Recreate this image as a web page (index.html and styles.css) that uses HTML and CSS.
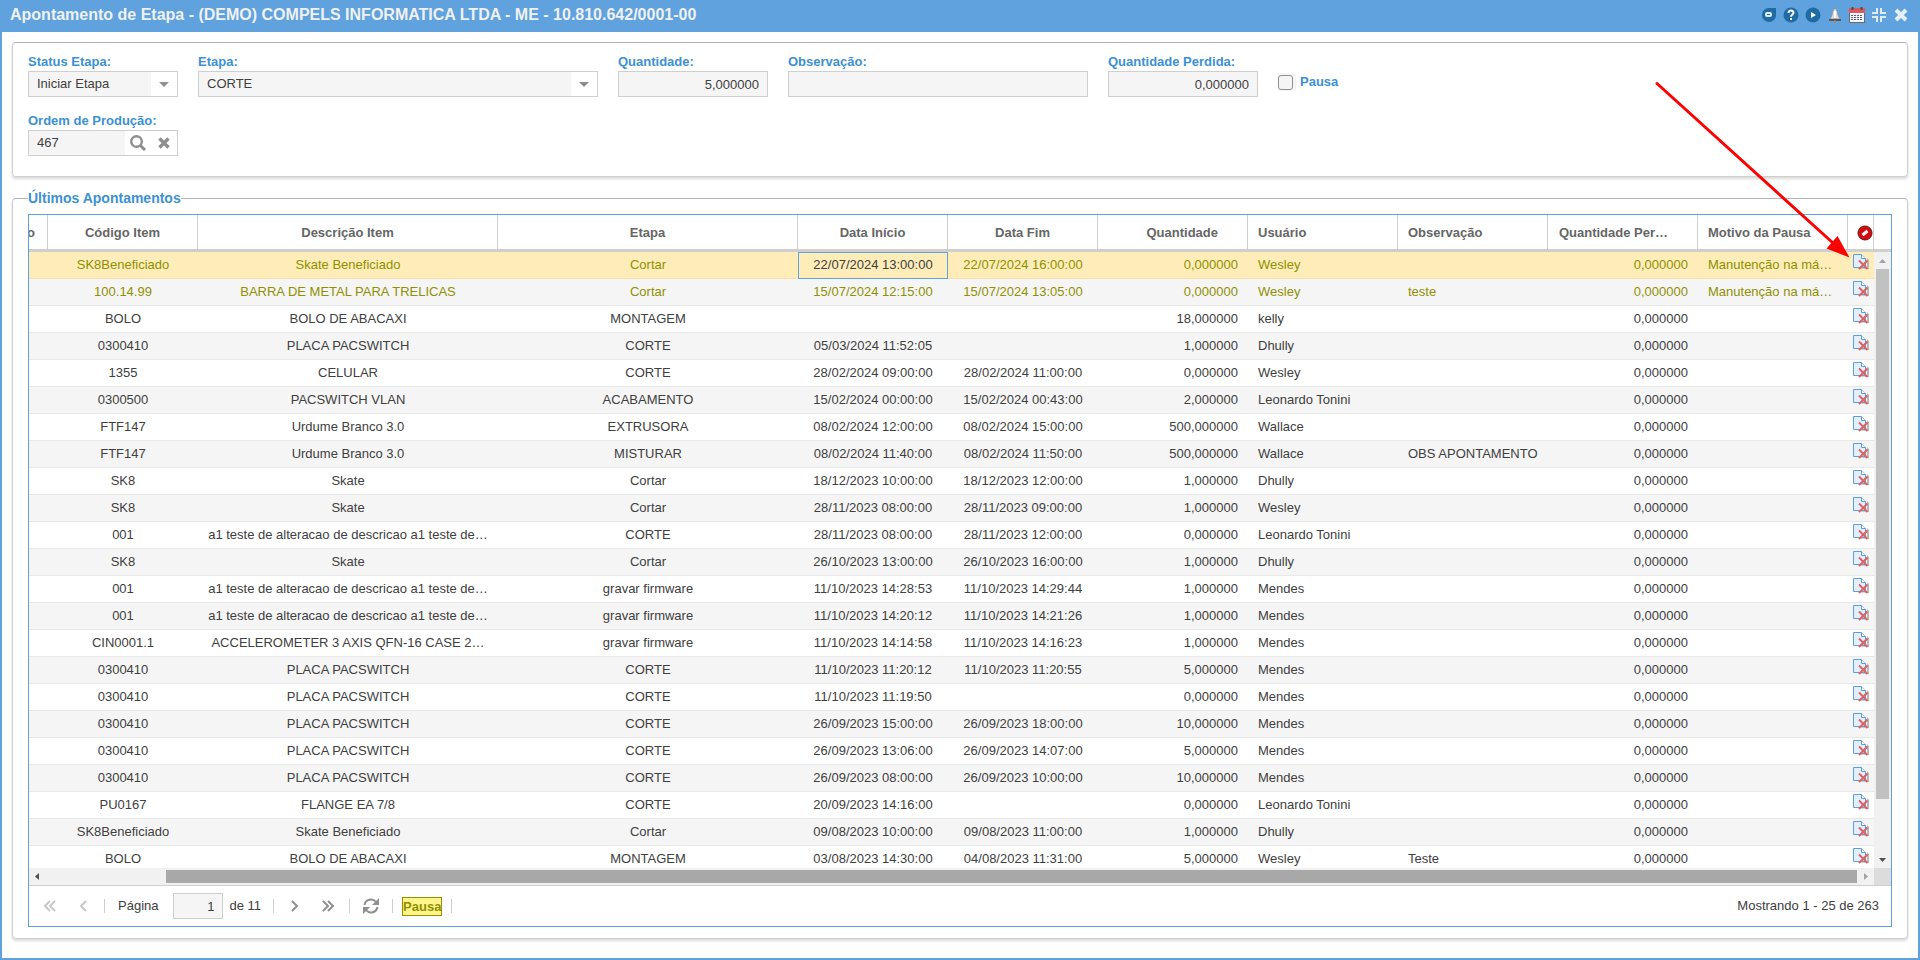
FILE: index.html
```html
<!DOCTYPE html>
<html lang="pt-BR">
<head>
  <meta charset="utf-8" />
  <meta name="viewport" content="width=device-width, initial-scale=1" />
  <title>Apontamento de Etapa</title>
  <link rel="stylesheet" href="styles.css">
</head>
<body>
<svg class="sprite" aria-hidden="true">
  <symbol id="i-delete" viewBox="0 0 16 16">
    <path d="M3 15H16V6L14 4V14Z" fill="#b9b9b9" />
    <path d="M.5 .5H8.500L12.500 4.500V13.500H.5Z" fill="#e3effc" stroke="#5c9fe4" />
    <path d="M8.500 .5V4.500H12.500" fill="#fff" stroke="#5c9fe4" />
    <path d="M6 6.500L14.500 15M14.500 6.500L6 15" fill="none" stroke="#de6262" stroke-width="2" />
  </symbol>
</svg>

<header class="title">
  <h1 class="title-text">Apontamento de Etapa - (DEMO) COMPELS INFORMATICA LTDA - ME - 10.810.642/0001-00</h1>
  <div class="title-tools">
    <button class="tool" type="button" aria-label="Chat"><svg viewBox="0 0 16 16"><path d="M7 1H15V8A7 7 0 0 1 8 15A7 7 0 0 1 1 8A7 7 0 0 1 7 1Z" fill="#1e6ba6" /><rect x="4" y="5" width="7" height="5" rx="2" fill="#e3eefa" /><path d="M6 7.500H9" stroke="#1e6ba6" /></svg></button>
    <button class="tool" type="button" aria-label="Ajuda"><svg viewBox="0 0 16 16"><circle cx="8" cy="8" r="7.500" fill="#1e6ba6" /><path d="M5.500 6C5.500 2.800 10.500 2.800 10.500 5.800C10.500 7.600 8 7.500 8 9.800" fill="none" stroke="#fff" stroke-width="2" /><rect x="7" y="11" width="2" height="2" fill="#fff" /></svg></button>
    <button class="tool" type="button" aria-label="Executar"><svg viewBox="0 0 16 16"><circle cx="8" cy="8" r="7.500" fill="#1e6ba6" /><path d="M6 5L11 8L6 11Z" fill="#fff" /></svg></button>
    <button class="tool" type="button" aria-label="Avisos"><svg viewBox="0 0 16 16"><path d="M8 1C10 3 11 5 11 8L13 12H3L5 8C5 5 6 3 8 1Z" fill="#d9dde0" stroke="#8c949b" /><path d="M8 4V11" stroke="#fff" stroke-width="2" /><path d="M2 13H14" stroke="#52585e" stroke-width="2" /><path d="M7 14.500H9" stroke="#d97b2b" stroke-width="2" /></svg></button>
    <button class="tool" type="button" aria-label="Agenda"><svg viewBox="0 0 16 16"><rect x=".5" y="1.500" width="15" height="14" fill="#f5f5fa" stroke="#6d6a75" /><rect x="0" y="1" width="16" height="5" fill="#d95b5b" /><path d="M3.500 0V3M12.500 0V3" stroke="#4a4a55" stroke-width="2" /><path d="M2 8.500H14M2 10.500H14M2 12.500H14" stroke="#5b5e92" stroke-dasharray="2 1" /></svg></button>
    <button class="tool" type="button" aria-label="Restaurar"><svg viewBox="0 0 16 16"><path d="M6 1V6H1M10 1V6H15M6 15V10H1M10 15V10H15" fill="none" stroke="#dfecf8" stroke-width="2" /></svg></button>
    <button class="tool" type="button" aria-label="Fechar"><svg viewBox="0 0 16 16"><path d="M3 3L13 13M13 3L3 13" stroke="#e4effa" stroke-width="4" /></svg></button>
  </div>
</header>

<main class="content">
  <form class="panel form">
    <div class="form-row">
      <div class="field">
        <label class="label" for="status">Status Etapa:</label>
        <div class="combo">
          <select class="input" id="status"><option>Iniciar Etapa</option></select>
        </div>
      </div>
      <div class="field field--wide">
        <label class="label" for="etapa">Etapa:</label>
        <div class="combo">
          <select class="input" id="etapa"><option>CORTE</option></select>
        </div>
      </div>
      <div class="field">
        <label class="label" for="quantidade">Quantidade:</label>
        <input class="input input--num" id="quantidade" type="text" value="5,000000" />
      </div>
      <div class="field field--obs">
        <label class="label" for="observacao">Observação:</label>
        <input class="input" id="observacao" type="text" value="" />
      </div>
      <div class="field">
        <label class="label" for="perdida">Quantidade Perdida:</label>
        <input class="input input--num" id="perdida" type="text" value="0,000000" />
      </div>
      <div class="check">
        <span class="check-box"><input class="check-input" id="pausa" type="checkbox" /></span>
        <label class="label" for="pausa">Pausa</label>
      </div>
    </div>
    <div class="form-row">
      <div class="field">
        <label class="label" for="ordem">Ordem de Produção:</label>
        <div class="search">
          <input class="search-input" id="ordem" type="text" value="467" />
          <button class="search-button" type="button" aria-label="Pesquisar"><svg viewBox="0 0 16 16"><circle cx="6.500" cy="6.500" r="5.300" fill="none" stroke="#8f8f8f" stroke-width="2.400" /><path d="M10 10L15 15" stroke="#8f8f8f" stroke-width="3" /></svg></button>
          <button class="search-button" type="button" aria-label="Limpar"><svg viewBox="0 0 16 16"><path d="M3.500 3.500L12.500 12.500M12.500 3.500L3.500 12.500" stroke="#8f8f8f" stroke-width="3.500" /></svg></button>
        </div>
      </div>
    </div>
  </form>

  <section class="panel list">
    <h2 class="legend">Últimos Apontamentos</h2>
    <div class="grid">
      <div class="grid-main">
        <div class="grid-view">
          <table class="table">
            <colgroup>
              <col class="col-cut" /><col class="col-std" /><col /><col />
              <col class="col-std" /><col class="col-std" /><col class="col-std" /><col class="col-std" />
              <col class="col-std" /><col class="col-std" /><col class="col-std" /><col class="col-icon" />
            </colgroup>
            <thead>
              <tr>
                <th class="cut">o</th>
                <th>Código Item</th>
                <th>Descrição Item</th>
                <th>Etapa</th>
                <th>Data Início</th>
                <th>Data Fim</th>
                <th class="num">Quantidade</th>
                <th class="txt">Usuário</th>
                <th class="txt">Observação</th>
                <th class="num">Quantidade Per…</th>
                <th class="txt">Motivo da Pausa</th>
                <th class="ico"><svg class="icon" viewBox="0 0 16 16"><circle cx="8" cy="8" r="7" fill="#d9090d" stroke="#5e1a1a" /><path d="M5.500 10L10.500 6" stroke="#fff" stroke-width="3" /></svg></th>
              </tr>
            </thead>
            <tbody id="rows"></tbody>
          </table>
        </div>
        <div class="vscroll">
          <div class="vscroll-head"></div>
          <div class="vscroll-track">
            <svg class="arrow" viewBox="0 0 17 17"><path d="M5 11L8.500 7L12 11Z" fill="#a3a3a3" /></svg>
            <div class="vscroll-range"><div class="vscroll-thumb"></div></div>
            <svg class="arrow" viewBox="0 0 17 17"><path d="M5 7L8.500 11L12 7Z" fill="#505050" /></svg>
          </div>
        </div>
      </div>
      <div class="hscroll">
        <svg class="arrow" viewBox="0 0 17 17"><path d="M10 5L6 8.500L10 12Z" fill="#505050" /></svg>
        <div class="hscroll-range"><div class="hscroll-thumb"></div></div>
        <svg class="arrow" viewBox="0 0 17 17"><path d="M7 5L11 8.500L7 12Z" fill="#a3a3a3" /></svg>
        <div class="corner"></div>
      </div>
      <div class="pager">
        <button class="page-button" type="button" aria-label="Primeira página" disabled><svg viewBox="0 0 16 16"><path d="M8 3L3 8L8 13M13 3L8 8L13 13" /></svg></button>
        <button class="page-button" type="button" aria-label="Página anterior" disabled><svg viewBox="0 0 16 16"><path d="M11 3L6 8L11 13" /></svg></button>
        <span class="sep"></span>
        <label class="page-label" for="pagina">Página</label>
        <input class="input input--num page-input" id="pagina" type="text" value="1" />
        <span class="page-total">de 11</span>
        <span class="sep"></span>
        <button class="page-button" type="button" aria-label="Próxima página"><svg viewBox="0 0 16 16"><path d="M5 3L10 8L5 13" /></svg></button>
        <button class="page-button" type="button" aria-label="Última página"><svg viewBox="0 0 16 16"><path d="M3 3L8 8L3 13M8 3L13 8L8 13" /></svg></button>
        <span class="sep"></span>
        <button class="page-button page-button--refresh" type="button" aria-label="Atualizar"><svg viewBox="0 0 16 16"><path d="M1.500 7A6.500 6.500 0 0 1 13 4M14.500 9A6.500 6.500 0 0 1 3 12" /><path class="solid" d="M16 0V7H9ZM0 16V9H7Z" /></svg></button>
        <span class="sep"></span>
        <span class="badge">Pausa</span>
        <span class="sep"></span>
        <span class="page-info">Mostrando 1 - 25 de 263</span>
      </div>
    </div>
  </section>
</main>

<svg class="pointer" viewBox="0 0 200 180" aria-hidden="true">
  <path d="M6 3.500L182 163" stroke="#f00" stroke-width="3" stroke-linecap="round" />
  <path d="M198.500 177.500L175.500 168.500L186.500 156Z" fill="#f00" />
</svg>
<script src="script.js"></script>
</body>
</html>
```

FILE: styles.css
```css
:root {
  --blue: #5fa2dd;
  --label: #3d91d3;
  --line: #cfcfcf;
  --field: #f5f5f5;
  --text: #404040;
  --olive: #909000;
}
* {
  box-sizing: border-box;
}
body {
  margin: 0;
  height: 100vh;
  display: flex;
  flex-direction: column;
  overflow: hidden;
  border: 2px solid var(--blue);
  border-top: 0;
  background: #fff;
  color: var(--text);
  font: 13px/16px "Liberation Sans", Arial, sans-serif;
}
button {
  padding: 0;
  border: 0;
  background: none;
  cursor: pointer;
}
svg {
  display: block;
}
.sprite {
  display: none;
}

/* title bar */
.title {
  flex: none;
  display: flex;
  align-items: center;
  justify-content: space-between;
  height: 32px;
  padding: 0 9px 2px 8px;
  background: var(--blue);
}
.title-text {
  margin: 0;
  color: #f0f0f0;
  font-size: 16px;
  line-height: 20px;
  white-space: nowrap;
}
.title-tools {
  display: flex;
  gap: 6px;
}
.tool,
.tool svg {
  width: 16px;
  height: 16px;
}

.content {
  flex: 1;
  min-height: 0;
  display: flex;
  flex-direction: column;
  gap: 21px;
  padding: 10px 10px 19px;
}
.panel {
  border: 1px solid var(--line);
  border-top-color: #b5b5b5;
  border-radius: 4px;
  box-shadow: 0 2px 3px rgba(0, 0, 0, .15);
}

/* form */
.form {
  display: flex;
  flex-direction: column;
  gap: 15px;
  padding: 10px 15px 20px;
}
.form-row {
  display: flex;
  gap: 20px;
}
.field {
  width: 150px;
}
.field--wide {
  width: 400px;
}
.field--obs {
  width: 300px;
}
.label {
  display: block;
  color: var(--label);
  font-weight: bold;
  line-height: 18px;
}
.input {
  display: block;
  width: 100%;
  height: 26px;
  margin: 0;
  padding: 0 8px;
  border: 1px solid var(--line);
  border-radius: 0;
  background: var(--field);
  color: var(--text);
  font: inherit;
  appearance: none;
}
.input--num {
  text-align: right;
}
.combo {
  position: relative;
}
.combo .input {
  background: linear-gradient(to left, #fff 26px, var(--field) 26px);
}
.combo::after {
  content: "";
  position: absolute;
  right: 9px;
  top: 11px;
  border: 5px solid transparent;
  border-top-color: #8f8f8f;
  border-bottom: 0;
  pointer-events: none;
}
.check {
  display: flex;
  gap: 4px;
  padding-top: 20px;
}
.check-box {
  width: 18px;
  height: 18px;
  padding: 2px 0;
  background: var(--field);
}
.check-input {
  display: block;
  width: 15px;
  height: 15px;
  margin: 0;
  border: 1px solid #8f8f8f;
  border-radius: 3px;
  background: var(--field);
  appearance: none;
}
.search {
  display: flex;
  height: 26px;
  border: 1px solid var(--line);
}
.search-input {
  flex: 1;
  min-width: 0;
  padding: 0 8px;
  border: 0;
  background: var(--field);
  color: var(--text);
  font: inherit;
}
.search-button {
  width: 26px;
}
.search-button svg {
  width: 16px;
  height: 16px;
  margin: 0 auto;
}

/* grid */
.list {
  flex: 1;
  min-height: 0;
  display: flex;
  flex-direction: column;
  padding: 0 15px 11px;
}
.legend {
  align-self: flex-start;
  margin: -10px 0 7px;
  background: #fff;
  color: var(--label);
  font-size: 14px;
  line-height: 18px;
}
.grid {
  flex: 1;
  min-height: 0;
  display: flex;
  flex-direction: column;
  border: 1px solid var(--blue);
}
.grid-main {
  flex: 1;
  min-height: 0;
  display: flex;
}
.grid-view {
  flex: 1;
  min-width: 0;
  overflow: hidden;
}
.table {
  width: 100%;
  table-layout: fixed;
  border-collapse: separate;
  border-spacing: 0;
}
.col-cut {
  width: 19px;
}
.col-std {
  width: 150px;
}
.col-icon {
  width: 26px;
}
.table th,
.table td {
  padding: 0 10px;
  overflow: hidden;
  white-space: nowrap;
  text-align: center;
}
.table th {
  height: 37px;
  padding-top: 2px;
  border-right: 1px solid var(--line);
  border-bottom: 3px solid var(--line);
  color: #666;
}
.table td {
  height: 27px;
  border-bottom: 1px solid #e8e8e8;
}
.table .num {
  text-align: right;
}
.table th.num {
  padding-right: 29px;
}
.table .txt {
  text-align: left;
}
.table .cut {
  padding-left: 0;
  padding-right: 13px;
  direction: rtl;
  text-align: right;
}
.table .ico {
  padding: 0 4px 2px;
}
.table th.ico {
  padding: 2px 0 0 9px;
}
.icon {
  width: 16px;
  height: 16px;
}
.row:nth-child(even) {
  background: var(--field);
}
.row--pausa {
  color: var(--olive);
}
.row--selected {
  background: #feedb9;
}
.row--selected td {
  border-bottom-color: #f3e2ae;
}
.row .focus {
  color: var(--text);
  outline: 1px solid var(--blue);
  outline-offset: -1px;
}

/* scroll bars */
.arrow {
  flex: none;
  width: 17px;
  height: 17px;
}
.vscroll {
  flex: none;
  display: flex;
  flex-direction: column;
  width: 17px;
}
.vscroll-head {
  height: 37px;
  border-bottom: 3px solid var(--line);
}
.vscroll-track {
  flex: 1;
  display: flex;
  flex-direction: column;
  background: #f1f1f1;
}
.vscroll-range {
  flex: 1;
  padding: 0 2px;
}
.vscroll-thumb {
  height: 91%;
  background: #c1c1c1;
}
.hscroll {
  flex: none;
  display: flex;
  height: 17px;
  background: #f1f1f1;
}
.hscroll-range {
  flex: 1;
  padding: 2px 0 2px 120px;
}
.hscroll-thumb {
  height: 13px;
  background: #a8a8a8;
}
.corner {
  width: 17px;
  background: #dcdcdc;
}

/* paging bar */
.pager {
  flex: none;
  display: flex;
  align-items: center;
  height: 41px;
  padding: 0 12px 0 9px;
  border-top: 1px solid var(--line);
}
.page-button {
  width: 24px;
  height: 24px;
  margin-right: 9px;
}
.page-button svg {
  width: 16px;
  height: 16px;
  margin: 0 auto;
  fill: none;
  stroke: #8f8f8f;
  stroke-width: 2;
}
.page-button:disabled svg {
  stroke: #c7c7c7;
}
.page-button--refresh svg .solid {
  fill: #8f8f8f;
  stroke: none;
}
.sep {
  width: 1px;
  height: 14px;
  margin-right: 9px;
  background: var(--line);
}
.page-label {
  margin: 0 15px 0 4px;
}
.page-input {
  width: 50px;
  margin-right: 6px;
}
.page-total {
  margin-right: 12px;
}
.badge {
  margin-right: 9px;
  border: 1px solid var(--olive);
  background: #fff48a;
  color: var(--olive);
  font-weight: bold;
  line-height: 17px;
}
.page-info {
  margin-left: auto;
}

/* annotation arrow, drawn over the page */
.pointer {
  position: absolute;
  top: 80px;
  right: 69px;
  width: 200px;
  height: 180px;
  pointer-events: none;
}
```

FILE: script.js
```js
// codigo, descricao, etapa, inicio, fim, quantidade, usuario, observacao, motivo
const apontamentos = [
  ['SK8Beneficiado', 'Skate Beneficiado', 'Cortar', '22/07/2024 13:00:00', '22/07/2024 16:00:00', '0,000000', 'Wesley', '', 'Manutenção na má…'],
  ['100.14.99', 'BARRA DE METAL PARA TRELICAS', 'Cortar', '15/07/2024 12:15:00', '15/07/2024 13:05:00', '0,000000', 'Wesley', 'teste', 'Manutenção na má…'],
  ['BOLO', 'BOLO DE ABACAXI', 'MONTAGEM', '', '', '18,000000', 'kelly', '', ''],
  ['0300410', 'PLACA PACSWITCH', 'CORTE', '05/03/2024 11:52:05', '', '1,000000', 'Dhully', '', ''],
  ['1355', 'CELULAR', 'CORTE', '28/02/2024 09:00:00', '28/02/2024 11:00:00', '0,000000', 'Wesley', '', ''],
  ['0300500', 'PACSWITCH VLAN', 'ACABAMENTO', '15/02/2024 00:00:00', '15/02/2024 00:43:00', '2,000000', 'Leonardo Tonini', '', ''],
  ['FTF147', 'Urdume Branco 3.0', 'EXTRUSORA', '08/02/2024 12:00:00', '08/02/2024 15:00:00', '500,000000', 'Wallace', '', ''],
  ['FTF147', 'Urdume Branco 3.0', 'MISTURAR', '08/02/2024 11:40:00', '08/02/2024 11:50:00', '500,000000', 'Wallace', 'OBS APONTAMENTO', ''],
  ['SK8', 'Skate', 'Cortar', '18/12/2023 10:00:00', '18/12/2023 12:00:00', '1,000000', 'Dhully', '', ''],
  ['SK8', 'Skate', 'Cortar', '28/11/2023 08:00:00', '28/11/2023 09:00:00', '1,000000', 'Wesley', '', ''],
  ['001', 'a1 teste de alteracao de descricao a1 teste de…', 'CORTE', '28/11/2023 08:00:00', '28/11/2023 12:00:00', '0,000000', 'Leonardo Tonini', '', ''],
  ['SK8', 'Skate', 'Cortar', '26/10/2023 13:00:00', '26/10/2023 16:00:00', '1,000000', 'Dhully', '', ''],
  ['001', 'a1 teste de alteracao de descricao a1 teste de…', 'gravar firmware', '11/10/2023 14:28:53', '11/10/2023 14:29:44', '1,000000', 'Mendes', '', ''],
  ['001', 'a1 teste de alteracao de descricao a1 teste de…', 'gravar firmware', '11/10/2023 14:20:12', '11/10/2023 14:21:26', '1,000000', 'Mendes', '', ''],
  ['CIN0001.1', 'ACCELEROMETER 3 AXIS QFN-16 CASE 2…', 'gravar firmware', '11/10/2023 14:14:58', '11/10/2023 14:16:23', '1,000000', 'Mendes', '', ''],
  ['0300410', 'PLACA PACSWITCH', 'CORTE', '11/10/2023 11:20:12', '11/10/2023 11:20:55', '5,000000', 'Mendes', '', ''],
  ['0300410', 'PLACA PACSWITCH', 'CORTE', '11/10/2023 11:19:50', '', '0,000000', 'Mendes', '', ''],
  ['0300410', 'PLACA PACSWITCH', 'CORTE', '26/09/2023 15:00:00', '26/09/2023 18:00:00', '10,000000', 'Mendes', '', ''],
  ['0300410', 'PLACA PACSWITCH', 'CORTE', '26/09/2023 13:06:00', '26/09/2023 14:07:00', '5,000000', 'Mendes', '', ''],
  ['0300410', 'PLACA PACSWITCH', 'CORTE', '26/09/2023 08:00:00', '26/09/2023 10:00:00', '10,000000', 'Mendes', '', ''],
  ['PU0167', 'FLANGE EA 7/8', 'CORTE', '20/09/2023 14:16:00', '', '0,000000', 'Leonardo Tonini', '', ''],
  ['SK8Beneficiado', 'Skate Beneficiado', 'Cortar', '09/08/2023 10:00:00', '09/08/2023 11:00:00', '1,000000', 'Dhully', '', ''],
  ['BOLO', 'BOLO DE ABACAXI', 'MONTAGEM', '03/08/2023 14:30:00', '04/08/2023 11:31:00', '5,000000', 'Wesley', 'Teste', ''],
]

function rowHtml([codigo, descricao, etapa, inicio, fim, quantidade, usuario, observacao, motivo], index) {
  const classes = ['row']
  if (motivo) classes.push('row--pausa')
  if (index === 0) classes.push('row--selected')
  return `<tr class="${classes.join(' ')}">
    <td></td>
    <td>${codigo}</td>
    <td>${descricao}</td>
    <td>${etapa}</td>
    <td class="${index === 0 ? 'focus' : ''}">${inicio}</td>
    <td>${fim}</td>
    <td class="num">${quantidade}</td>
    <td class="txt">${usuario}</td>
    <td class="txt">${observacao}</td>
    <td class="num">0,000000</td>
    <td class="txt">${motivo}</td>
    <td class="ico"><button type="button" aria-label="Excluir"><svg class="icon"><use href="#i-delete" /></svg></button></td>
  </tr>`
}

document.getElementById('rows').innerHTML = apontamentos.map(rowHtml).join('')
```
